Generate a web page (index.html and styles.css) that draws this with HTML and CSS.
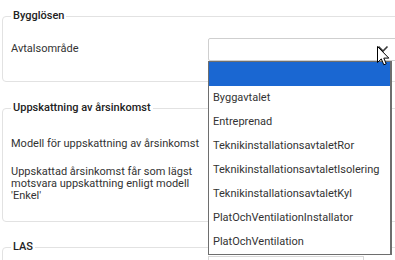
FILE: index.html
```html
<!DOCTYPE html>
<html lang="sv">
<head>
<meta charset="utf-8">
<link rel="stylesheet" href="styles.css">
</head>
<body>
<div class="page">
  <fieldset class="fs fs-first">
    <legend class="lg">Bygglösen</legend>
    <div class="row">
      <div class="label">Avtalsområde</div>
      <div class="select">
        <svg class="chev" width="12" height="8" viewBox="0 0 12 8"><path d="M1.5 1.5 L6 6 L10.5 1.5" fill="none" stroke="#3a3a3a" stroke-width="1.6"/></svg>
      </div>
    </div>
  </fieldset>

  <fieldset class="fs fs-second">
    <legend class="lg">Uppskattning av årsinkomst</legend>
    <div class="label">Modell för uppskattning av årsinkomst</div>
    <div class="label para">Uppskattad årsinkomst får som lägst motsvara uppskattning enligt modell 'Enkel'</div>
  </fieldset>

  <fieldset class="fs fs-third">
    <legend class="lg">LAS</legend>
    <div class="row">
      <div class="label"></div>
      <div class="box"></div>
    </div>
  </fieldset>

  <ul class="dropdown">
    <li class="opt sel">&nbsp;</li>
    <li class="opt">Byggavtalet</li>
    <li class="opt">Entreprenad</li>
    <li class="opt">TeknikinstallationsavtaletRor</li>
    <li class="opt">TeknikinstallationsavtaletIsolering</li>
    <li class="opt">TeknikinstallationsavtaletKyl</li>
    <li class="opt">PlatOchVentilationInstallator</li>
    <li class="opt">PlatOchVentilation</li>
  </ul>

  <svg class="cursor" width="13" height="20" viewBox="0 0 13 20"><path d="M0.5 0.5 L0.5 16.5 L4.3 12.9 L6.8 18.8 L9.2 17.8 L6.8 12.1 L11.8 12.1 Z" fill="#fff" stroke="#000" stroke-width="1" stroke-linejoin="round"/></svg>
</div>
</body>
</html>
```

FILE: styles.css
```css
html, body {
  margin: 0;
  padding: 0;
  background: #fff;
}
.page {
  position: relative;
  width: 395px;
  height: 260px;
  overflow: hidden;
  font-family: Roboto, "Liberation Sans", sans-serif;
  font-size: 11px;
  line-height: 13px;
  color: #333;
}
.fs {
  width: 430px;
  margin: 0 0 0 2px;
  padding: 0 8px;
  border: 1px solid #e2e2e2;
  border-radius: 4px;
  box-sizing: border-box;
}
.fs-first {
  margin-top: 9px;
  padding-top: 15px;
  padding-bottom: 20px;
}
.fs-second {
  margin-top: 19px;
  padding-top: 22px;
  padding-bottom: 19px;
}
.fs-third {
  margin-top: 18px;
  padding-top: 2px;
  height: 40px;
}
.lg {
  padding: 0 2px;
  font-weight: 500;
  line-height: 14px;
  color: #222;
}
.row {
  display: flex;
  align-items: flex-start;
}
.label {
  width: 197px;
  flex: none;
}
.fs-first .label {
  padding-top: 4px;
}
.para {
  margin-top: 16px;
  line-height: 12px;
}
.select {
  position: relative;
  flex: none;
  width: 200px;
  height: 23px;
  border: 1px solid #cfcfcf;
  border-radius: 2px;
  box-sizing: border-box;
}
.chev {
  position: absolute;
  left: 168px;
  top: 6px;
}
.box {
  width: 156px;
  height: 30px;
  border: 1px solid #d8d8d8;
  box-sizing: border-box;
}
.dropdown {
  position: absolute;
  left: 208px;
  top: 61px;
  width: 184px;
  margin: 0;
  padding: 0;
  list-style: none;
  background: #fff;
  border: 1px solid #6e6e6e;
  border-right-width: 2px;
  box-sizing: border-box;
}
.opt {
  height: 24px;
  line-height: 24px;
  padding-left: 4px;
  white-space: nowrap;
}
.sel {
  background: #1a67d2;
}
.cursor {
  position: absolute;
  left: 377px;
  top: 46px;
}
```
